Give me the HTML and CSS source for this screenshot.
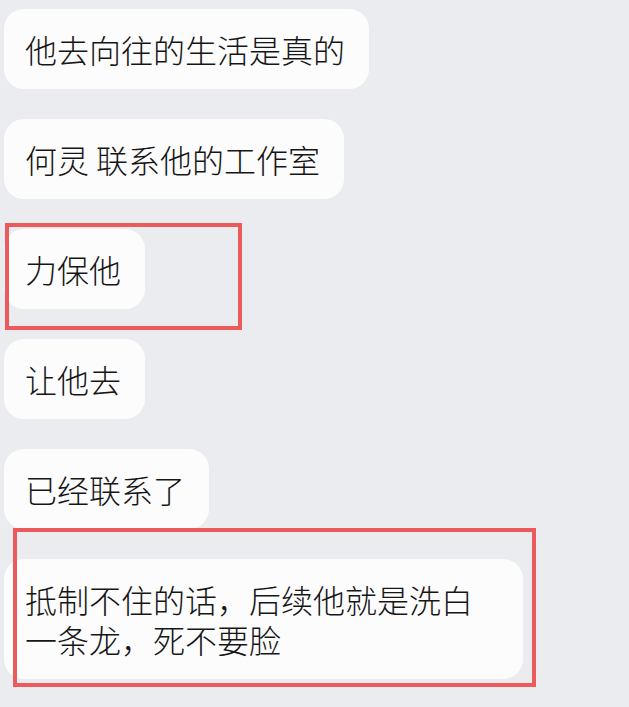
FILE: index.html
```html
<!DOCTYPE html>
<html lang="zh-CN">
  <head>
    <meta charset="UTF-8">
    <meta name="viewport" content="width=device-width, initial-scale=1.0">
    <title>聊天记录</title>
    <link rel="stylesheet" href="styles.css">
  </head>
  <body>
    <div class="chat">
      <div class="bubble">他去向往的生活是真的</div>
      <div class="bubble">何灵 联系他的工作室</div>
      <div class="bubble">力保他</div>
      <div class="bubble">让他去</div>
      <div class="bubble">已经联系了</div>
      <div class="bubble wide">抵制不住的话，后续他就是洗白一条龙，死不要脸</div>
      <div class="mark mark-one"></div>
      <div class="mark mark-two"></div>
    </div>
  </body>
</html>
```

FILE: styles.css
```css
body { margin: 0; background: #ebecf0; font-family: "Noto Sans CJK SC", "Noto Sans", sans-serif; }
.chat { position: relative; display: flex; flex-direction: column; align-items: flex-start; gap: 30px; padding: 9px 0 0 4px; height: 698px; box-sizing: content-box; }
.bubble { background: #fcfcfd; color: #161616; font-size: 32px; font-weight: 300; line-height: 40px; padding: 20px 24px 20px 21px; border-radius: 20px; }
.bubble.wide { box-sizing: border-box; max-width: 519px; padding-right: 30px; }
.mark { position: absolute; border: 4px solid #ec5a5c; box-sizing: border-box; }
.mark-one { left: 5px; top: 223px; width: 237px; height: 107px; }
.mark-two { left: 13px; top: 528px; width: 523px; height: 159px; }
```
